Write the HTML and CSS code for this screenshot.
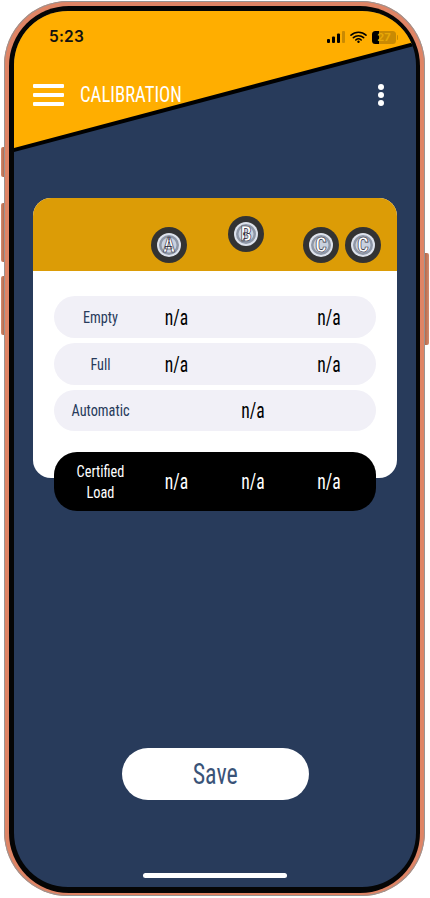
FILE: index.html
```html
<!DOCTYPE html>
<html lang="en">
<head>
<meta charset="utf-8">
<title>Calibration</title>
<link rel="stylesheet" href="styles.css">
</head>
<body>
<div class="phone">
  <span class="side side-mute"></span>
  <span class="side side-up"></span>
  <span class="side side-down"></span>
  <span class="side side-power"></span>
  <div class="bezel">
    <main class="screen">
      <svg class="banner" viewBox="0 0 402 876" aria-hidden="true">
        <polygon points="0,0 402,0 402,32 0,139" fill="#FFAE00"/>
        <line x1="-2" y1="139.5" x2="404" y2="32" stroke="#000" stroke-width="4"/>
      </svg>
      <div class="status">
        <span class="time">5:23</span>
        <span class="status-icons">
          <svg class="signal" viewBox="0 0 18 12"><rect x="0" y="8" width="3" height="4" rx="1" fill="#000"/><rect x="5" y="5.5" width="3" height="6.5" rx="1" fill="#000"/><rect x="10" y="2.5" width="3" height="9.5" rx="1" fill="#000"/><rect x="15" y="0" width="3" height="12" rx="1" fill="#C98A03"/></svg>
          <svg class="wifi" viewBox="0 0 17 12"><path d="M1 4.2a11 11 0 0 1 15 0M3.4 6.7a7.5 7.5 0 0 1 10.2 0M5.8 9a4 4 0 0 1 5.4 0" fill="none" stroke="#000" stroke-width="1.6" stroke-linecap="round"/><circle cx="8.5" cy="10.8" r="1.2" fill="#000"/></svg>
          <span class="battery"><span class="battery-fill"></span><span class="battery-num">27</span></span>
        </span>
      </div>
      <header class="appbar">
        <span class="burger"><i></i><i></i><i></i></span>
        <h1 class="title">CALIBRATION</h1>
        <span class="kebab"><i></i><i></i><i></i></span>
      </header>
      <section class="card">
        <div class="card-head">
          <svg class="wheel wheel-a" viewBox="0 0 36 36"><use href="#w"/><text x="18" y="25" class="wheel-letter">A</text></svg>
          <svg class="wheel wheel-b" viewBox="0 0 36 36">
            <defs>
              <g id="w">
                <circle cx="18" cy="18" r="18" fill="#333333"/>
                <circle cx="18" cy="18" r="12" fill="#DDE2EC"/>
                <circle cx="18" cy="18" r="10" fill="#8F97A6"/>
                <circle cx="18" cy="18" r="7.5" fill="#C9D1DF"/>
              </g>
            </defs>
            <use href="#w"/><text x="18" y="25" class="wheel-letter">B</text>
          </svg>
          <svg class="wheel wheel-c1" viewBox="0 0 36 36"><use href="#w"/><text x="18" y="25" class="wheel-letter">C</text></svg>
          <svg class="wheel wheel-c2" viewBox="0 0 36 36"><use href="#w"/><text x="18" y="25" class="wheel-letter">C</text></svg>
        </div>
        <div class="rows">
          <div class="row"><span class="label">Empty</span><span class="val">n/a</span><span class="val"></span><span class="val">n/a</span></div>
          <div class="row"><span class="label">Full</span><span class="val">n/a</span><span class="val"></span><span class="val">n/a</span></div>
          <div class="row row-auto"><span class="label">Automatic</span><span class="val"></span><span class="val">n/a</span><span class="val"></span></div>
          <div class="row row-black"><span class="label">Certified<br>Load</span><span class="val">n/a</span><span class="val">n/a</span><span class="val">n/a</span></div>
        </div>
      </section>
      <div class="footer">
        <button class="save" type="button"><span class="save-text">Save</span></button>
        <span class="home"></span>
      </div>
    </main>
  </div>
</div>
</body>
</html>
```
FILE: styles.css
```css
* { box-sizing: border-box; }
html, body { margin: 0; padding: 0; background: #fff; }
body { width: 430px; height: 898px; overflow: hidden; font-family: "Roboto", sans-serif; font-stretch: 75%; }

.phone {
  position: relative;
  width: 421px;
  height: 895px;
  margin: 1px 0 0 4px;
  padding: 5px 5.5px 3px 5px;
  border-radius: 64px;
  background: #DF8465;
  box-shadow: inset 0 0 0 1px #9A9492;
}
.side { position: absolute; width: 3.5px; background: linear-gradient(90deg, #D38A6D, #B5694B); }
.side-mute { left: -3.5px; top: 146px; height: 30px; border-radius: 2px 0 0 2px; }
.side-up { left: -3.5px; top: 202px; height: 59px; border-radius: 2px 0 0 2px; }
.side-down { left: -3.5px; top: 275px; height: 59px; border-radius: 2px 0 0 2px; }
.side-power { right: -3.5px; top: 252px; height: 92px; border-radius: 0 2px 2px 0; background: linear-gradient(90deg, #B5694B, #D38A6D); }

.bezel { height: 100%; padding: 5px 3px 5px 5px; border-radius: 60px; background: #050505; }
.screen {
  position: relative;
  display: flex;
  flex-direction: column;
  width: 402px;
  height: 876px;
  border-radius: 54px;
  overflow: hidden;
  background: #283B5B;
}
.banner { position: absolute; inset: 0; width: 402px; height: 876px; }

.status {
  position: relative;
  display: flex;
  justify-content: space-between;
  align-items: center;
  height: 30px;
  margin-top: 11px;
  padding: 0 20px 0 35px;
}
.time { font: 600 15.5px/1 "Inter", sans-serif; color: #111; letter-spacing: .2px; }
.status-icons { display: flex; align-items: center; gap: 5px; }
.signal { width: 18px; height: 12px; }
.wifi { width: 17px; height: 12px; }
.battery {
  position: relative;
  display: block;
  width: 24px;
  height: 13px;
  border-radius: 3.5px;
  background: #C98A03;
}
.battery::after { content: ""; position: absolute; right: -2px; top: 4px; width: 1.5px; height: 5px; border-radius: 0 1px 1px 0; background: #C98A03; }
.battery-fill { position: absolute; left: 0; top: 0; bottom: 0; width: 7px; background: #000; border-radius: 3.5px 0 0 3.5px; }
.battery-num { position: absolute; inset: 0; text-align: center; font: 700 11px/13px "Inter", sans-serif; color: #E8A806; }

.appbar {
  position: relative;
  display: flex;
  align-items: center;
  height: 22px;
  margin-top: 32px;
  padding: 0 32px 0 19px;
}
.burger { display: flex; flex-direction: column; gap: 5.5px; width: 31px; }
.burger i { display: block; height: 3.4px; border-radius: 1px; background: #fff; }
.title { flex: 1; margin: 0 0 0 16px; font-size: 22px; font-weight: 400; line-height: 22px; color: #fff; transform: scaleX(.85); transform-origin: left center; }
.kebab { display: flex; flex-direction: column; gap: 2px; }
.kebab i { display: block; width: 6px; height: 6px; border-radius: 50%; background: #fff; }

.card {
  position: relative;
  height: 280px;
  margin: 92px 19px 0;
  border-radius: 18px;
  background: #fff;
}
.card-head {
  display: flex;
  align-items: flex-end;
  height: 73px;
  padding: 0 0 8px 118px;
  border-radius: 18px 18px 0 0;
  background: #DC9C06;
}
.wheel { flex: none; width: 36px; height: 36px; }
.wheel-b { margin: 0 0 11px 41px; }
.wheel-c1 { margin-left: 39px; }
.wheel-c2 { margin-left: 6px; }
.wheel-letter { font: 700 20px "Roboto", sans-serif; font-stretch: 75%; text-anchor: middle; fill: #fff; stroke: #1d2230; stroke-width: .6px; }

.rows { display: flex; flex-direction: column; gap: 5px; padding: 25px 21px 0; }
.row {
  display: grid;
  grid-template-columns: 93px 59px 94px 58px;
  align-items: center;
  height: 42px;
  border-radius: 21px;
  background: #F1F0F7;
  text-align: center;
}
.row-auto { height: 41px; }
.label { font-size: 17px; font-weight: 400; line-height: 21px; color: #283B5B; transform: scaleX(.84); }
.val { font-size: 22px; font-weight: 400; color: #000; transform: scaleX(.8); }
.row-black { height: 59px; margin-top: 16px; border-radius: 23px; background: #000; }
.row-black .label, .row-black .val { color: #fff; }

.footer {
  position: relative;
  display: flex;
  flex-direction: column;
  align-items: center;
  margin-top: auto;
}
.save {
  width: 187px;
  height: 52px;
  border: 0;
  border-radius: 26px;
  background: #fff;
  font: 400 30px/1 "Roboto", sans-serif;
  font-stretch: 75%;
  color: #3A5378;
}
.save-text { display: inline-block; transform: scaleX(.8); }
.home { width: 144px; height: 5px; margin: 73px 0 9px; border-radius: 3px; background: #fff; }
```
